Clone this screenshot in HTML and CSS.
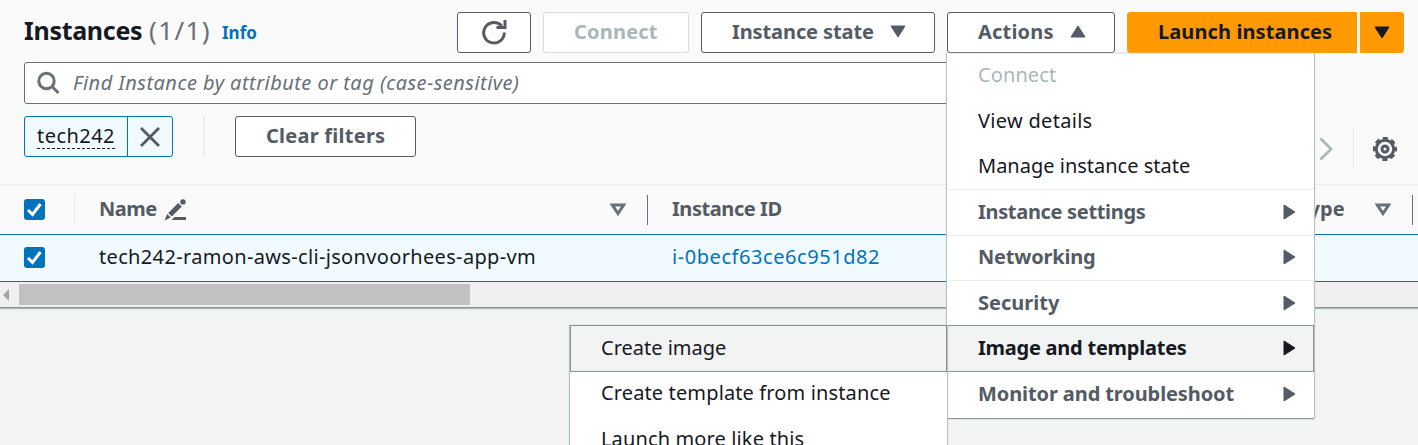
FILE: index.html
```html
<!DOCTYPE html>
<html lang="en">
<head>
<meta charset="utf-8">
<title>Instances</title>
<link rel="stylesheet" href="styles.css">
</head>
<body>
<main class="page">
  <section class="panel">
    <header class="header">
      <h1 class="title"><span class="t title-name">Instances</span><span class="t title-count">(1/1)</span></h1>
      <a class="t info">Info</a>
      <div class="actions">
        <button class="btn btn-refresh" aria-label="Refresh"><svg width="26" height="26" viewBox="0 0 26 26" fill="none" stroke="#545b64" stroke-width="3"><path d="M23.300 13.500A10.300 10.300 0 1 1 20.800 7"/><path d="M24 1v7.500h-8.500"/></svg></button>
        <button class="btn btn-connect"><span class="t t-connect">Connect</span></button>
        <button class="btn btn-state"><span class="t t-state">Instance state</span><svg class="caret" width="16" height="13" viewBox="0 0 16 13"><path d="M1 1h14L8 12z"/></svg></button>
        <button class="btn btn-actions"><span class="t t-actions">Actions</span><svg class="caret" width="16" height="13" viewBox="0 0 16 13"><path d="M1 12h14L8 1z"/></svg></button>
        <button class="btn btn-launch"><span class="t t-launch">Launch instances</span></button>
        <button class="btn btn-more" aria-label="More"><svg class="caret" width="16" height="13" viewBox="0 0 16 13"><path d="M1 1h14L8 12z"/></svg></button>
      </div>
    </header>
    <div class="search">
      <svg width="24" height="24" viewBox="0 0 24 24" fill="none" stroke="#687078" stroke-width="3"><circle cx="9.500" cy="10" r="7.700"/><path d="M15 15.500l6.500 6.500"/></svg>
      <span class="t placeholder">Find Instance by attribute or tag (case-sensitive)</span>
    </div>
    <div class="filters">
      <div class="token"><span class="token-label"><span class="t t-token">tech242</span></span><span class="token-x"><svg width="20" height="20" viewBox="0 0 20 20"><path d="M1 1l18 18M19 1L1 19" stroke="#545b64" stroke-width="2.800"/></svg></span></div>
      <i class="sep"></i>
      <button class="btn btn-clear"><span class="t t-clear">Clear filters</span></button>
      <div class="pager">
        <svg width="14" height="24" viewBox="0 0 14 24"><path d="M1.500 1.500L12 12 1.500 22.500" fill="none" stroke="#aab7b8" stroke-width="2.800"/></svg>
        <i class="pager-sep"></i>
        <svg width="24" height="24" viewBox="0 0 24 24" fill="none" stroke="#545b64" stroke-width="3"><circle cx="12" cy="12" r="8.700"/><circle cx="12" cy="12" r="10.700" stroke-width="2.800" stroke-dasharray="5 3.404" stroke-dashoffset="2.500"/><circle cx="12" cy="12" r="3"/></svg>
      </div>
    </div>
    <div class="thead">
      <span class="check"><svg width="21" height="21" viewBox="0 0 21 21"><path d="M4 11l4.500 4.500L16.500 5" fill="none" stroke="#fff" stroke-width="3"/></svg></span>
      <div class="col col-name"><span class="t t-name">Name</span>
        <svg class="pencil" width="23" height="22" viewBox="0 0 23 22" fill="#545b64"><circle cx="19" cy="2.900" r="2.700"/><path d="M14.200 4l3.600 3.600-10 10L4.200 14zM3.200 14.900l3.600 3.600L.5 21.500zM10.500 18H22v3H7.500z"/></svg>
        <svg class="sort" width="16" height="13" viewBox="0 0 16 13"><path d="M2.300 2h11.400L8 10.500z"/></svg></div>
      <div class="col col-id"><span class="t t-id">Instance ID</span></div>
      <div class="col col-type"><span class="t t-type">Instance type</span><svg class="sort" width="16" height="13" viewBox="0 0 16 13"><path d="M2.300 2h11.400L8 10.500z"/></svg></div>
    </div>
    <div class="row">
      <span class="check"><svg width="21" height="21" viewBox="0 0 21 21"><path d="M4 11l4.500 4.500L16.500 5" fill="none" stroke="#fff" stroke-width="3"/></svg></span>
      <div class="cell-name"><span class="t t-vm">tech242-ramon-aws-cli-jsonvoorhees-app-vm</span></div>
      <a class="cell-id"><span class="t t-vmid">i-0becf63ce6c951d82</span></a>
    </div>
    <div class="scrollbar"><svg width="19" height="12" viewBox="0 0 19 12"><path d="M9 0v12L3 6z" fill="#a3a3a3"/></svg><div class="thumb"></div></div>
  </section>

  <nav class="menu">
    <div class="item disabled"><span class="t m1">Connect</span></div>
    <div class="item view"><span class="t m2">View details</span></div>
    <div class="item"><span class="t m3">Manage instance state</span></div>
    <div class="item group settings"><span class="t m4">Instance settings</span><svg width="13" height="16" viewBox="0 0 13 16"><path d="M1 1v14l11-7z"/></svg></div>
    <div class="item group"><span class="t m5">Networking</span><svg width="13" height="16" viewBox="0 0 13 16"><path d="M1 1v14l11-7z"/></svg></div>
    <div class="item group short"><span class="t m6">Security</span><svg width="13" height="16" viewBox="0 0 13 16"><path d="M1 1v14l11-7z"/></svg></div>
    <div class="item group active"><span class="t m7">Image and templates</span><svg width="13" height="16" viewBox="0 0 13 16"><path d="M1 1v14l11-7z"/></svg></div>
    <div class="item group last"><span class="t m8">Monitor and troubleshoot</span><svg width="13" height="16" viewBox="0 0 13 16"><path d="M1 1v14l11-7z"/></svg></div>
  </nav>
  <nav class="submenu">
    <div class="item active"><span class="t s1">Create image</span></div>
    <div class="item next"><span class="t s2">Create template from instance</span></div>
    <div class="item"><span class="t s3">Launch more like this</span></div>
  </nav>
</main>
</body>
</html>
```
FILE: styles.css
```css
* { box-sizing: border-box; }
body { margin: 0; font-family: "Noto Sans", "Open Sans", sans-serif; font-size: 20px; line-height: 28px; color: #16191f; background: #f2f3f3; }
.page { position: relative; width: 1418px; height: 445px; overflow: hidden; }
.t { white-space: nowrap; display: inline-block; }
.panel { height: 308px; background: #fafafa; border-bottom: 1px solid #879596; box-shadow: 0 1px 1px #aab7b8; }
.header { display: flex; padding: 12px 14px 0 24px; height: 62px; }
.title { margin: 0; font-size: 25px; line-height: 36px; display: flex; gap: 6px; }
.title-name { width: 119px; letter-spacing: -.3px; }
.title-count { width: 62px; font-size: 26px; font-weight: 400; color: #687078; letter-spacing: 1.4px; }
.info { font-size: 17px; font-weight: 700; color: #0073bb; margin: 7px 0 0 11px; }
.actions { display: flex; gap: 12px; margin-left: auto; }
.btn { display: flex; align-items: center; justify-content: space-between; height: 41px; padding: 0 30px 2px; border: 1px solid #545b64; border-radius: 3px; background: #fff; color: #545b64; font: 700 20px/28px "Noto Sans", sans-serif; }
.btn svg { flex: none; }
.caret { fill: #545b64; stroke: #545b64; stroke-width: 1; stroke-linejoin: round; }
.btn-refresh { width: 74px; padding: 0 0 1px; justify-content: center; }
.btn-connect { width: 146px; border-color: #d5dbdb; color: #aab7b8; }
.btn-state { width: 234px; padding-right: 28px; }
.btn-actions { width: 168px; padding-right: 28px; }
.btn-launch { width: 230px; background: #ff9900; border-color: #ff9900; color: #16191f; border-radius: 3px 0 0 3px; }
.btn-more { width: 44px; padding: 0; justify-content: center; background: #ff9900; border-color: #ff9900; border-radius: 0 3px 3px 0; margin-left: -9px; }
.btn-more .caret { fill: #16191f; stroke: #16191f; }
.t-connect, .t-actions { letter-spacing: .2px; }
.t-state { letter-spacing: -.1px; }
.t-launch { letter-spacing: .1px; }
.t-clear { letter-spacing: .25px; }
.search { display: flex; align-items: center; width: 1184px; height: 42px; margin-left: 24px; padding: 0 12px; gap: 12px; background: #fff; border: 1px solid #687078; border-radius: 3px; }
.placeholder { font-style: italic; color: #687078; letter-spacing: .46px; }
.filters { display: flex; padding: 12px 21px 0 24px; height: 80px; }
.token { display: flex; width: 149px; height: 41px; background: #f1faff; border: 1px solid #0073bb; border-radius: 3px; }
.token-label { width: 103px; padding: 5px 0 0 12px; border-right: 1px solid #0073bb; }
.t-token { height: 27px; border-bottom: 1px dashed #16191f; letter-spacing: .46px; }
.token-x { display: flex; flex: 1; align-items: center; justify-content: center; }
.sep { width: 2px; height: 41px; margin: 0 30px; background: #eaeded; }
.btn-clear { width: 181px; }
.pager { display: flex; align-items: center; height: 41px; margin: 12px 0 0 auto; }
.pager-sep { width: 1px; height: 41px; margin: 0 19px 0 20px; background: #eaeded; }
.thead { display: flex; align-items: center; height: 50px; border-top: 1px solid #eaeded; padding-left: 24px; }
.check { width: 21px; height: 21px; border-radius: 3px; background: #0073bb; flex: none; }
.row .check { margin-bottom: 2px; }
.check svg { display: block; }
.col { display: flex; align-items: center; height: 30px; flex: none; border-right: 1px solid #687078; font-weight: 700; color: #545b64; }
.col .t { padding-bottom: 2px; }
.col-name { width: 574px; margin-left: 29px; border-left: 1px solid #eaeded; padding: 0 21px 0 24px; }
.t-name { letter-spacing: -.5px; }
.t-id { letter-spacing: -.43px; }
.pencil { margin-left: 7px; }
.col .sort { margin-left: auto; fill: none; stroke: #687078; stroke-width: 3px; }
.col-id { width: 560px; padding-left: 24px; border-right: 0; }
.col-type { width: 205px; padding: 0 21px 0 0; }
.row { display: flex; align-items: center; height: 48px; padding-left: 24px; background: #f1faff; border-top: 1px solid #0073bb; border-bottom: 1px solid #0073bb; }
.row .t { display: block; padding-bottom: 2px; }
.cell-name { width: 573px; margin-left: 54px; letter-spacing: .34px; }
.cell-id { color: #0073bb; letter-spacing: .56px; }
.scrollbar { display: flex; align-items: center; height: 25px; background: #f0f0f0; }
.thumb { width: 451px; height: 21px; background: #c1c1c1; }
.menu, .submenu { position: absolute; background: #fff; box-shadow: 0 1px 1px #879596, 1px 0 1px #c3caca, -1px 0 1px #c3caca; }
.menu { left: 947px; top: 53px; width: 367px; height: 365px; border-top: 1px solid #eaeded; }
.submenu { left: 570px; top: 325px; width: 377px; height: 140px; }
.item { display: flex; align-items: center; justify-content: space-between; height: 45.500px; padding: 0 18px 2px 31px; border-top: 1px solid transparent; }
.disabled { color: #aab7b8; height: 44px; padding-bottom: 3px; }
.view { padding-bottom: 0; }
.group { font-weight: 700; color: #545b64; fill: #545b64; border-top: 1px solid #eaeded; }
.group svg { stroke: currentColor; stroke-linejoin: round; }
.group.settings { padding-bottom: 0; }
.group.short { height: 45px; padding-bottom: 0; }
.item.active { height: 47px; border: 1px solid #879596; padding: 0 17px 2px 30px; background: #f2f3f3; color: #16191f; fill: #16191f; }
.item.last { border-top: 0; height: 45px; }
.next { height: 44.500px; padding-bottom: 3px; }
.m1 { letter-spacing: .1px; }
.m2 { letter-spacing: .3px; }
.m4 { letter-spacing: -.32px; }
.m5 { letter-spacing: -.2px; }
.m7 { letter-spacing: -.24px; }
.m8 { letter-spacing: -.1px; }
.s2, .s3 { letter-spacing: .13px; }
```
